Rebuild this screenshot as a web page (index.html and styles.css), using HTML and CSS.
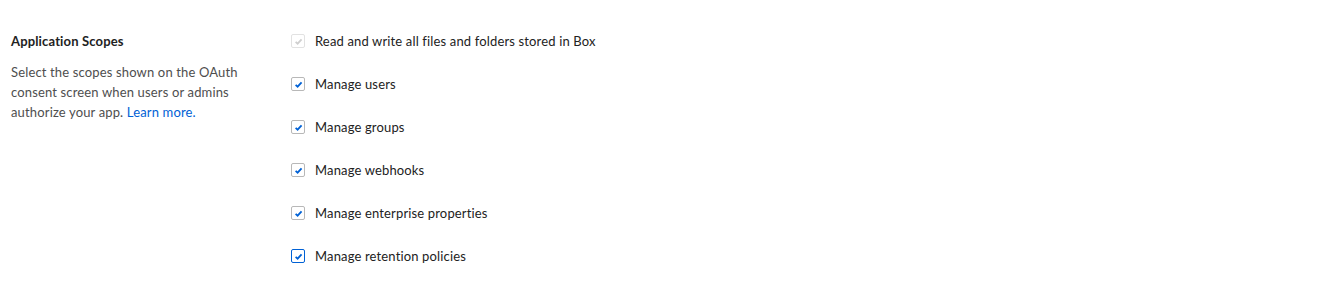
FILE: index.html
```html
<!DOCTYPE html>
<html>
<head>
<meta charset="utf-8">
<link rel="stylesheet" href="styles.css">
</head>
<body>
<div class="section">
  <div class="intro">
    <h3 class="title">Application Scopes</h3>
    <p class="desc">Select the scopes shown on the OAuth consent screen when users or admins authorize your app. <a href="#" class="link">Learn more.</a></p>
  </div>
  <ul class="scopes">
    <li class="scope"><span class="box disabled"><svg viewBox="0 0 10 10" width="9" height="9"><path d="M1.8 5.4 L4 7.4 L8.4 2.6" fill="none" stroke="#cfcfcf" stroke-width="2"/></svg></span>Read and write all files and folders stored in Box</li>
    <li class="scope"><span class="box"><svg viewBox="0 0 10 10" width="9" height="9"><path d="M1.8 5.4 L4 7.4 L8.4 2.6" fill="none" stroke="#0061d5" stroke-width="2"/></svg></span>Manage users</li>
    <li class="scope"><span class="box"><svg viewBox="0 0 10 10" width="9" height="9"><path d="M1.8 5.4 L4 7.4 L8.4 2.6" fill="none" stroke="#0061d5" stroke-width="2"/></svg></span>Manage groups</li>
    <li class="scope"><span class="box"><svg viewBox="0 0 10 10" width="9" height="9"><path d="M1.8 5.4 L4 7.4 L8.4 2.6" fill="none" stroke="#0061d5" stroke-width="2"/></svg></span>Manage webhooks</li>
    <li class="scope"><span class="box"><svg viewBox="0 0 10 10" width="9" height="9"><path d="M1.8 5.4 L4 7.4 L8.4 2.6" fill="none" stroke="#0061d5" stroke-width="2"/></svg></span>Manage enterprise properties</li>
    <li class="scope"><span class="box focused"><svg viewBox="0 0 10 10" width="9" height="9"><path d="M1.8 5.4 L4 7.4 L8.4 2.6" fill="none" stroke="#0061d5" stroke-width="2"/></svg></span>Manage retention policies</li>
  </ul>
</div>
</body>
</html>
```
FILE: styles.css
```css
html, body { margin: 0; padding: 0; background: #fff; }
body { font-family: Lato, "Open Sans", sans-serif; color: #222; font-size: 13px; letter-spacing: 0.15px; }
.section { display: flex; padding: 32px 0 0 11px; }
.intro { width: 280px; }
.title { margin: 0; font-size: 13px; font-weight: 700; color: #222; line-height: 18px; }
.desc { margin: 12px 0 0; width: 240px; line-height: 20px; color: #4e4e4e; }
.link { color: #0061d5; text-decoration: none; }
.scopes { list-style: none; margin: 0; padding: 0; }
.scope { display: flex; align-items: center; height: 18px; margin-bottom: 25px; color: #222; }
.box { box-sizing: border-box; width: 14px; height: 14px; border: 1px solid #b8b8b8; border-radius: 2px; display: flex; align-items: center; justify-content: center; margin-right: 10px; background: #fff; }
.box.disabled { border-color: #e2e2e2; }
.box.focused { border-color: #0061d5; }
```
